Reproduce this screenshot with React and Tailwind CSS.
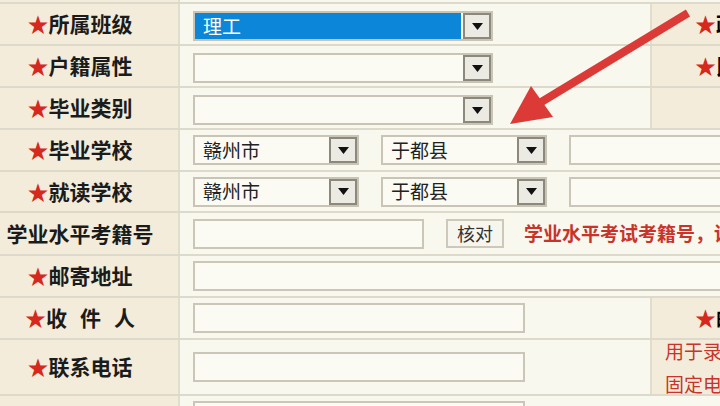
import React from "react";

const FONT = { fontFamily: '"Noto Sans CJK SC", "Noto Sans", sans-serif' };

function Star() {
  return <span className="text-[#d6281c]">★</span>;
}

function Label({ children, req = true }) {
  return (
    <div className="w-[180px] shrink-0 bg-[#f3ecda] border-r-2 border-[#e2dccb] flex items-center justify-center pr-[18px] text-[21px] font-bold text-[#1b1b1b] whitespace-nowrap">
      {req && <Star />}
      {children}
    </div>
  );
}

function DropBtn() {
  return (
    <div className="w-[28px] h-full shrink-0 border-2 border-[#8c887b] bg-[#ecebe3] flex items-center justify-center">
      <svg width="11" height="7" viewBox="0 0 11 7">
        <path d="M0 0 L11 0 L5.5 7 Z" fill="#111" />
      </svg>
    </div>
  );
}

function Select({ className, text, selected }) {
  return (
    <div className={`flex h-[30px] border-2 border-[#c9c5b6] bg-[#fbfbf4] ${className}`}>
      <div
        className={`flex-1 flex items-center px-[8px] text-[19px] ${
          selected ? "bg-[#0b86d8] text-white mr-[2px]" : "text-[#222]"
        }`}
      >
        {text}
      </div>
      <DropBtn />
    </div>
  );
}

function Input({ className }) {
  return <div className={`h-[30px] border-2 border-[#cbc7b8] bg-[#fbfbf4] ${className}`} />;
}

function RightCell({ children, className = "" }) {
  return (
    <div className={`flex-1 bg-[#f3ecda] border-l-2 border-[#e2dccb] overflow-hidden ${className}`}>
      {children}
    </div>
  );
}

function Row({ h, children }) {
  return <div className={`flex ${h} border-b-2 border-[#dedacb]`}>{children}</div>;
}

export default function App() {
  return (
    <div className="relative w-[720px] h-[406px] overflow-hidden bg-[#f8f8ef]" style={FONT}>
      <div className="flex h-[4px] border-b-2 border-[#dedacb]">
        <div className="w-[180px] bg-[#f3ecda] border-r-2 border-[#e2dccb]" />
      </div>

      <Row h="h-[42px]">
        <Label>所属班级</Label>
        <div className="w-[470px] shrink-0 flex items-center pl-[13px] pt-[4px]">
          <Select className="w-[300px]" text="理工" selected />
        </div>
        <RightCell className="flex items-center pl-[43px] text-[21px] font-bold whitespace-nowrap">
          <Star />
          <span>政治面貌</span>
        </RightCell>
      </Row>

      <Row h="h-[42px]">
        <Label>户籍属性</Label>
        <div className="w-[470px] shrink-0 flex items-center pl-[13px] pt-[4px]">
          <Select className="w-[300px]" text="" />
        </div>
        <RightCell className="flex items-center pl-[43px] text-[21px] font-bold whitespace-nowrap">
          <Star />
          <span>民族</span>
        </RightCell>
      </Row>

      <Row h="h-[42px]">
        <Label>毕业类别</Label>
        <div className="w-[470px] shrink-0 flex items-center pl-[13px] pt-[4px]">
          <Select className="w-[300px]" text="" />
        </div>
        <RightCell />
      </Row>

      <Row h="h-[42px]">
        <Label>毕业学校</Label>
        <div className="flex-1 flex items-center pl-[13px] gap-[22px]">
          <Select className="w-[166px]" text="赣州市" />
          <Select className="w-[166px]" text="于都县" />
          <Input className="w-[200px]" />
        </div>
      </Row>

      <Row h="h-[41px]">
        <Label>就读学校</Label>
        <div className="flex-1 flex items-center pl-[13px] gap-[22px]">
          <Select className="w-[166px]" text="赣州市" />
          <Select className="w-[166px]" text="于都县" />
          <Input className="w-[200px]" />
        </div>
      </Row>

      <Row h="h-[43px]">
        <Label req={false}>学业水平考籍号</Label>
        <div className="flex-1 flex items-center pl-[13px] whitespace-nowrap overflow-hidden">
          <Input className="w-[231px] shrink-0" />
          <div className="ml-[22px] w-[58px] h-[29px] shrink-0 border-2 border-[#cdc9ba] bg-[#f7f6ee] flex items-center justify-center text-[18px] text-[#333]">
            核对
          </div>
          <span className="ml-[20px] text-[19px] font-bold text-[#c8342b]">学业水平考试考籍号，请准确填写</span>
        </div>
      </Row>

      <Row h="h-[42px]">
        <Label>邮寄地址</Label>
        <div className="flex-1 flex items-center pl-[13px]">
          <Input className="w-[560px]" />
        </div>
      </Row>

      <Row h="h-[42px]">
        <Label>
          收<span className="ml-[13px]">件</span>
          <span className="ml-[13px]">人</span>
        </Label>
        <div className="w-[470px] shrink-0 flex items-center pl-[13px]">
          <Input className="w-[332px]" />
        </div>
        <RightCell className="flex items-center pl-[43px] text-[21px] font-bold whitespace-nowrap">
          <Star />
          <span>邮政编码</span>
        </RightCell>
      </Row>

      <Row h="h-[56px]">
        <Label>联系电话</Label>
        <div className="w-[470px] shrink-0 flex items-center pl-[13px]">
          <Input className="w-[332px]" />
        </div>
        <RightCell className="flex flex-col justify-center pl-[13px] text-[19px] leading-[33px] text-[#c8342b] whitespace-nowrap">
          <span>用于录取通知书</span>
          <span>固定电话请加区号</span>
        </RightCell>
      </Row>

      <div className="flex h-[40px]">
        <Label req={false}>{""}</Label>
        <div className="flex-1 pl-[13px] pt-[5px]">
          <Input className="w-[332px]" />
        </div>
      </div>

      <svg className="absolute left-0 top-0 pointer-events-none" width="720" height="406" viewBox="0 0 720 406">
        <line x1="688" y1="13" x2="538" y2="104" stroke="#dc3a36" strokeWidth="8" strokeLinecap="butt" />
        <path d="M510 124 L531 86 L553 117 Z" fill="#dc3a36" />
      </svg>
    </div>
  );
}
